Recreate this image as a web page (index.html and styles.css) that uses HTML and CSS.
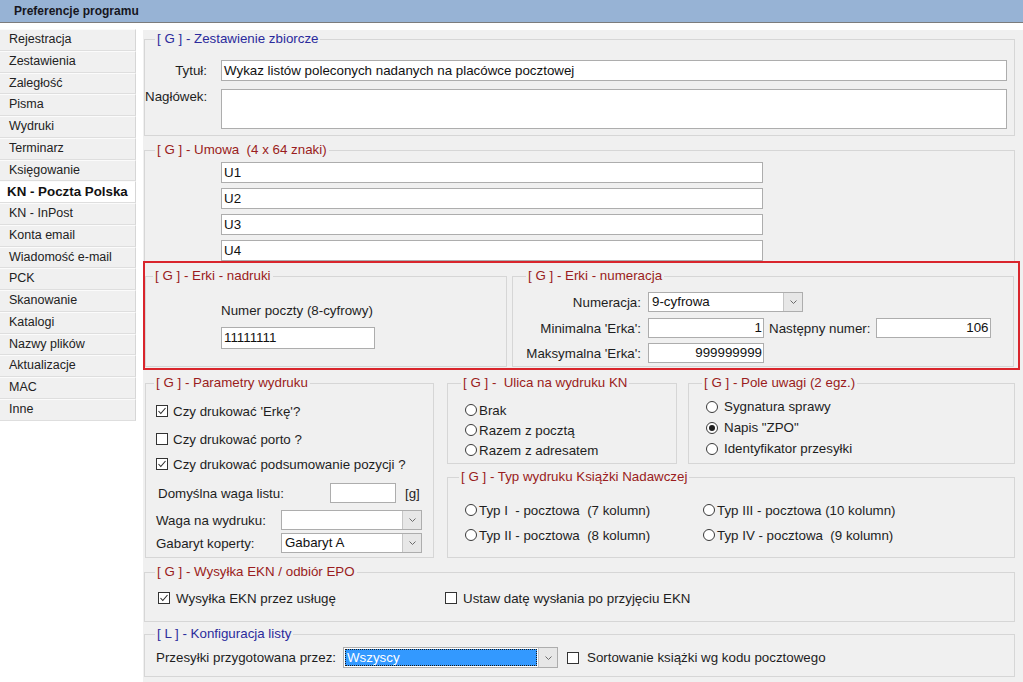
FILE: index.html
```html
<!DOCTYPE html>
<html lang="pl">
<head>
<meta charset="utf-8">
<title>Preferencje programu</title>
<link rel="stylesheet" href="styles.css">
</head>
<body>
<div class="titlebar">Preferencje programu</div>
<div class="main">
  <ul class="sidebar">
    <li>Rejestracja</li>
    <li>Zestawienia</li>
    <li>Zaległość</li>
    <li>Pisma</li>
    <li>Wydruki</li>
    <li>Terminarz</li>
    <li>Księgowanie</li>
    <li class="active">KN - Poczta Polska</li>
    <li>KN - InPost</li>
    <li>Konta email</li>
    <li>Wiadomość e-mail</li>
    <li>PCK</li>
    <li>Skanowanie</li>
    <li>Katalogi</li>
    <li>Nazwy plików</li>
    <li>Aktualizacje</li>
    <li>MAC</li>
    <li>Inne</li>
  </ul>

  <div class="panel">
    <div class="grp">
      <div class="cap pl-10"><span class="blue">[ G ] - Zestawienie zbiorcze</span></div>
      <div class="zest">
        <span class="lbl-r">Tytuł:</span>
        <div class="field">Wykaz listów poleconych nadanych na placówce pocztowej</div>
        <span class="lbl-r lbl-top">Nagłówek:</span>
        <div class="field textarea"></div>
      </div>
    </div>

    <div class="grp umowa-grp">
      <div class="cap pl-10"><span>[ G ] - Umowa&nbsp; (4 x 64 znaki)</span></div>
      <div class="umowa">
        <div class="field">U1</div>
        <div class="field">U2</div>
        <div class="field">U3</div>
        <div class="field">U4</div>
      </div>
    </div>

    <div class="highlight">
      <div class="grp">
        <div class="cap pl-7"><span>[ G ] - Erki - nadruki</span></div>
        <div class="nadruki">
          <span class="lbl">Numer poczty (8-cyfrowy)</span>
          <div class="field poczta">11111111</div>
        </div>
      </div>
      <div class="grp">
        <div class="cap pl-13"><span>[ G ] - Erki - numeracja</span></div>
        <div class="numeracja">
          <div class="nrow">
            <span class="nlbl">Numeracja:</span>
            <div class="select w155"><span class="val">9-cyfrowa</span><span class="btn"><svg width="7" height="4" viewBox="0 0 7 4"><polyline points="0.5,0.5 3.5,3.5 6.5,0.5"/></svg></span></div>
          </div>
          <div class="nrow r2">
            <span class="nlbl">Minimalna 'Erka':</span>
            <div class="field num w116">1</div>
            <span class="nlbl2">Następny numer:</span>
            <div class="field num w115">106</div>
          </div>
          <div class="nrow r3">
            <span class="nlbl">Maksymalna 'Erka':</span>
            <div class="field num w116">999999999</div>
          </div>
        </div>
      </div>
    </div>

    <div class="lower">
      <div class="grp">
        <div class="cap pl-8"><span>[ G ] - Parametry wydruku</span></div>
        <div class="param">
          <div class="row"><span class="cb"><svg width="10" height="10" viewBox="0 0 10 10"><polyline points="1.5,5 3.8,7.5 8.5,2"/></svg></span>Czy drukować 'Erkę'?</div>
          <div class="row g8"><span class="cb"></span>Czy drukować porto ?</div>
          <div class="row g5"><span class="cb"><svg width="10" height="10" viewBox="0 0 10 10"><polyline points="1.5,5 3.8,7.5 8.5,2"/></svg></span>Czy drukować podsumowanie pozycji ?</div>
          <div class="row g9"><span class="plbl wide">Domyślna waga listu:</span><div class="field w66"></div><span class="unit">[g]</span></div>
          <div class="row g7"><span class="plbl">Waga na wydruku:</span><div class="select w141"><span class="val"></span><span class="btn"><svg width="7" height="4" viewBox="0 0 7 4"><polyline points="0.5,0.5 3.5,3.5 6.5,0.5"/></svg></span></div></div>
          <div class="row g3"><span class="plbl">Gabaryt koperty:</span><div class="select w141"><span class="val">Gabaryt A</span><span class="btn"><svg width="7" height="4" viewBox="0 0 7 4"><polyline points="0.5,0.5 3.5,3.5 6.5,0.5"/></svg></span></div></div>
        </div>
      </div>

      <div class="rightcol">
        <div class="pair">
          <div class="grp">
            <div class="cap pl-13"><span>[ G ] -&nbsp; Ulica na wydruku KN</span></div>
            <div class="radios ulica">
              <div class="rrow"><span class="rb"></span>Brak</div>
              <div class="rrow"><span class="rb"></span>Razem z pocztą</div>
              <div class="rrow"><span class="rb"></span>Razem z adresatem</div>
            </div>
          </div>
          <div class="grp">
            <div class="cap pl-13"><span>[ G ] - Pole uwagi (2 egz.)</span></div>
            <div class="radios pole">
              <div class="rrow"><span class="rb"></span>Sygnatura sprawy</div>
              <div class="rrow"><span class="rb on"></span>Napis "ZPO"</div>
              <div class="rrow"><span class="rb"></span>Identyfikator przesyłki</div>
            </div>
          </div>
        </div>
        <div class="grp">
          <div class="cap pl-11"><span>[ G ] - Typ wydruku Książki Nadawczej</span></div>
          <div class="typ">
            <div class="rrow"><span class="rb"></span>Typ I&nbsp; - pocztowa&nbsp; (7 kolumn)</div>
            <div class="rrow"><span class="rb"></span>Typ III - pocztowa (10 kolumn)</div>
            <div class="rrow"><span class="rb"></span>Typ II - pocztowa&nbsp; (8 kolumn)</div>
            <div class="rrow"><span class="rb"></span>Typ IV - pocztowa&nbsp; (9 kolumn)</div>
          </div>
        </div>
      </div>
    </div>

    <div class="grp wysylka-grp">
      <div class="cap pl-10"><span>[ G ] - Wysyłka EKN / odbiór EPO</span></div>
      <div class="wysylka">
        <div class="row first"><span class="cb"><svg width="10" height="10" viewBox="0 0 10 10"><polyline points="1.5,5 3.8,7.5 8.5,2"/></svg></span>Wysyłka EKN przez usługę</div>
        <div class="row"><span class="cb"></span>Ustaw datę wysłania po przyjęciu EKN</div>
      </div>
    </div>

    <div class="grp konfig-grp">
      <div class="cap pl-10"><span class="blue">[ L ] - Konfiguracja listy</span></div>
      <div class="konfig">
        <span class="klbl">Przesyłki przygotowana przez:</span>
        <div class="select focus w215"><span class="val"><span class="sel">Wszyscy</span></span><span class="btn"><svg width="7" height="4" viewBox="0 0 7 4"><polyline points="0.5,0.5 3.5,3.5 6.5,0.5"/></svg></span></div>
        <span class="cb"></span><span class="ktext">Sortowanie książki wg kodu pocztowego</span>
      </div>
    </div>
  </div>
</div>
</body>
</html>
```
FILE: styles.css
```css
* { box-sizing: border-box; }
html, body { margin: 0; padding: 0; }
body {
  width: 1023px;
  height: 682px;
  overflow: hidden;
  background: #ffffff;
  font-family: "Liberation Sans", Arial, sans-serif;
  font-size: 13.33px;
  color: #1e1e1e;
}

.titlebar {
  height: 23px;
  background: #97b3d5;
  border-bottom: 1px solid #7c7c7c;
  font-size: 12px;
  font-weight: bold;
  line-height: 22px;
  padding-left: 14px;
  color: #16161e;
}

.main { display: flex; height: 659px; }

.sidebar {
  list-style: none;
  margin: 0;
  padding: 6px 0 0;
  width: 136px;
  flex: none;
  font-size: 12.5px;
  color: #222;
}
.sidebar li {
  height: 21.75px;
  line-height: 19.75px;
  padding-left: 9px;
  background: #f0f0f0;
  border-top: 1px solid #fbfbfb;
  border-bottom: 1px solid #dedede;
  border-right: 1px solid #d6d6d6;
  white-space: nowrap;
}
.sidebar li.active {
  background: #ffffff;
  font-weight: bold;
  font-size: 13.33px;
  padding-left: 7px;
  color: #111;
}

.panel {
  flex: 1;
  margin: 7px 0 0 7px;
  background: #f0f0f0;
  padding: 9px 8px 0 1px;
}

/* Group box with caption sitting on its top border */
.grp {
  border: 1px solid #d6d6d6;
  min-width: 0;
}
.cap {
  height: 16px;
  line-height: 16px;
  margin-top: -9px;
  white-space: nowrap;
}
.cap span {
  background: #f0f0f0;
  padding: 0 2px;
  color: #9a1c20;
}
.cap span.blue { color: #2b2b9c; }
.pl-7 { padding-left: 7px; }
.pl-8 { padding-left: 8px; }
.pl-10 { padding-left: 10px; }
.pl-11 { padding-left: 11px; }
.pl-13 { padding-left: 13px; }

.field {
  background: #ffffff;
  border: 1px solid #adadad;
  height: 21px;
  line-height: 19px;
  padding: 0 2px;
  white-space: nowrap;
  overflow: hidden;
  color: #111;
}
.field.num { text-align: right; padding-right: 1px; height: 20px; line-height: 18px; }

/* Zestawienie zbiorcze */
.zest {
  display: grid;
  grid-template-columns: 62px 1fr;
  column-gap: 14px;
  row-gap: 8px;
  align-items: center;
  padding: 13px 7px 6px 0;
}
.lbl-r { text-align: right; line-height: 16px; }
.lbl-top { align-self: start; }
.textarea { height: 40px; }

/* Umowa */
.umowa-grp { margin-top: 14px; }
.umowa {
  display: flex;
  flex-direction: column;
  gap: 5px;
  padding: 4px 0 0 76px;
}
.umowa .field { width: 542px; }

/* Red highlight */
.highlight {
  margin: -1px -5px 0 -1px;
  border: 2px solid #d9252c;
  display: grid;
  grid-template-columns: 362px 502px;
  column-gap: 5px;
  padding: 13px 0 1px 0;
}
.nadruki {
  display: flex;
  flex-direction: column;
  align-items: flex-start;
  gap: 8px;
  padding: 19px 0 0 75px;
}
.lbl { line-height: 16px; }
.field.poczta { width: 154px; height: 22px; line-height: 20px; }

.numeracja { padding: 8px 0 3px 8px; }
.nrow { display: flex; align-items: center; height: 20px; white-space: nowrap; }
.nrow.r2 { margin-top: 6px; }
.nrow.r3 { margin-top: 5px; }
.nlbl { width: 120px; flex: none; text-align: right; margin-right: 7px; }
.nlbl2 { margin: 0 5px; }
.w116 { width: 116px; }
.w115 { width: 115px; }

/* Select */
.select {
  display: flex;
  background: #ffffff;
  border: 1px solid #adadad;
  height: 20px;
  color: #111;
  flex: none;
}
.select .val {
  flex: 1;
  padding-left: 3px;
  line-height: 18px;
  white-space: nowrap;
  overflow: hidden;
}
.select .btn {
  width: 19px;
  flex: none;
  background: #e7e7e7;
  border-left: 1px solid #c6c6c6;
  display: flex;
  align-items: center;
  justify-content: center;
}
.select .btn svg polyline { fill: none; stroke: #6a6a6a; stroke-width: 1; }
.w155 { width: 155px; }
.w141 { width: 141px; }
.w215 { width: 215px; height: 21px; }
.w66 { width: 66px; height: 20px; flex: none; }

/* Lower */
.lower {
  display: grid;
  grid-template-columns: 289px 1fr;
  column-gap: 13px;
  margin-top: 13px;
  padding-left: 1px;
}
.param { padding: 10px 0 4px 10px; }
.row { display: flex; align-items: center; height: 20px; white-space: nowrap; }
.g3 { margin-top: 3px; }
.g5 { margin-top: 5px; }
.g7 { margin-top: 7px; }
.g8 { margin-top: 8px; }
.g9 { margin-top: 9px; }
.plbl { width: 125px; flex: none; }
.plbl.wide { width: 174px; padding-left: 2px; }
.unit { margin-left: 9px; }

.cb {
  width: 12px;
  height: 12px;
  flex: none;
  border: 1px solid #333333;
  background: #ffffff;
  margin-right: 5px;
  display: inline-flex;
  align-items: center;
  justify-content: center;
}
.cb svg polyline { fill: none; stroke: #2a2a2a; stroke-width: 1.1; }

.rightcol { display: flex; flex-direction: column; gap: 13px; }
.pair {
  display: grid;
  grid-template-columns: 230px 1fr;
  column-gap: 11px;
}
.radios.ulica { padding: 9px 0 3px 17px; }
.radios.ulica .rrow { height: 20px; }
.radios.pole { padding: 5px 0 0 17px; }
.radios.pole .rrow { height: 21px; }
.radios.pole .rb { margin-right: 6px; }
.rrow { display: flex; align-items: center; height: 20px; white-space: nowrap; }
.rb {
  width: 12px;
  height: 12px;
  flex: none;
  border: 1px solid #3a3a3a;
  border-radius: 50%;
  background: #ffffff;
  margin-right: 2px;
  display: inline-flex;
  align-items: center;
  justify-content: center;
}
.rb.on::after {
  content: "";
  width: 6px;
  height: 6px;
  border-radius: 50%;
  background: #1e1e1e;
}
.typ {
  display: grid;
  grid-template-columns: 238px auto;
  row-gap: 5px;
  padding: 15px 0 12px 17px;
}

/* Wysyłka */
.wysylka-grp { margin-top: 14px; }
.wysylka { display: flex; padding: 8px 0 13px 13px; }
.wysylka .row.first { width: 287px; }
.wysylka .cb { margin-right: 6px; }

/* Konfiguracja */
.konfig-grp { margin-top: 12px; }
.konfig {
  display: flex;
  align-items: center;
  padding: 5px 0 8px 11px;
  white-space: nowrap;
}
.klbl { width: 187px; flex: none; }
.select.focus .val { padding: 1px; }
.select.focus .sel {
  display: block;
  height: 100%;
  background: #3399ff;
  color: #ffffff;
  outline: 1px dotted #1a1a1a;
  outline-offset: -1px;
  padding-left: 2px;
  line-height: 17px;
}
.konfig .cb { margin: 0 8px 0 9px; }
```
